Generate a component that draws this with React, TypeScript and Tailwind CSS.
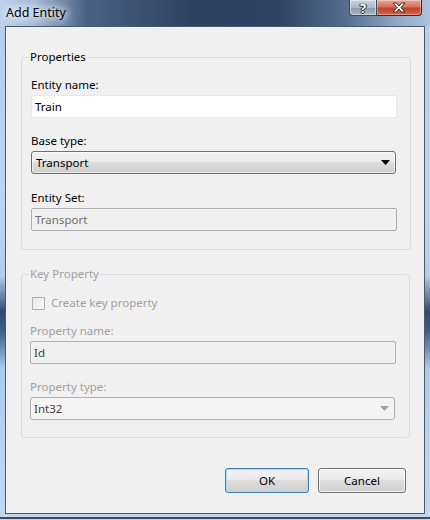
import React from "react";

const font = { fontFamily: '"Segoe UI", "Noto Sans", "Open Sans", sans-serif' };

function Label({ children, disabled }: { children: React.ReactNode; disabled?: boolean }) {
  return (
    <div className={`text-[11.5px] leading-[15px] ${disabled ? "text-[#a0a0a0]" : "text-black"}`}>{children}</div>
  );
}

function Arrow({ color }: { color: string }) {
  return (
    <svg width="9" height="5" viewBox="0 0 9 5">
      <path d="M0 0 H9 L4.5 5 Z" fill={color} />
    </svg>
  );
}

export default function App() {
  return (
    <div
      style={font}
      className="w-[430px] h-[520px] flex flex-col overflow-hidden bg-[linear-gradient(180deg,#b5cde9_0%,#bcd4ef_40%,#b3cdea_53%,#2f4a6c_60%,#40618a_64%,#aecbec_71%,#c2d8f1_100%)]"
    >
      {/* title bar */}
      <div className="h-[26px] flex items-start justify-between bg-[linear-gradient(90deg,#bcd2ea_0%,#a4bbd6_8%,#4a6384_20%,#2c425f_45%,#2e4462_65%,#536c8c_80%,#8fa6c1_92%,#aec3dc_100%)]">
        <div className="pl-[6px] pt-[5px] text-[12.5px] leading-[15px] text-black [text-shadow:0_0_6px_#ffffff,0_0_10px_#ffffff,0_0_14px_#ffffff]">
          Add Entity
        </div>
        <div className="flex mr-[8px]">
          <div className="w-[28px] h-[16px] border border-[#3a4658] border-t-0 rounded-bl-[4px] bg-[linear-gradient(180deg,#c9d3df_0%,#aab8c9_50%,#8b9cb2_55%,#a9b8ca_100%)] shadow-[inset_0_0_0_1px_rgba(255,255,255,0.45)] flex items-center justify-center">
            <span className="text-white font-bold text-[13px] leading-[14px] [text-shadow:0_0_1px_#222,0_0_1px_#222,1px_0_0_#333,-1px_0_0_#333,0_1px_0_#333]">?</span>
          </div>
          <div className="w-[45px] h-[16px] border border-[#3a2b2b] border-t-0 border-l-0 rounded-br-[4px] bg-[linear-gradient(180deg,#e8a99a_0%,#d1705d_45%,#c2412a_55%,#d6654a_100%)] shadow-[inset_0_0_0_1px_rgba(255,255,255,0.35)] flex items-center justify-center">
            <svg width="14" height="11" viewBox="0 0 14 11">
              <path
                d="M1 1 H4.5 L7 4 L9.5 1 H13 L9 5.5 L13 10 H9.5 L7 7 L4.5 10 H1 L5 5.5 Z"
                fill="#ffffff"
                stroke="#3d2a2a"
                strokeWidth="1"
                strokeLinejoin="round"
              />
            </svg>
          </div>
        </div>
      </div>

      {/* client area */}
      <div className="mx-[5px] h-[488px] border border-[#475a72] bg-[#f0f0f0] flex flex-col pl-[15px] pr-[13px] pt-[22px]">
        {/* Properties group */}
        <fieldset className="border border-[#d5dfe5] rounded-[3px] pl-[9px] pr-[13px] pt-[12px] pb-[17px] h-[201px]">
          <legend className="ml-[-2px] px-[1px] text-[11.5px] leading-[16px] text-black">Properties</legend>
          <Label>Entity name:</Label>
          <div className="mt-[3px] h-[23px] bg-white border border-[#e3e9ef] rounded-[2px] flex items-center pl-[3px] text-[11.5px] text-black">
            Train
          </div>
          <div className="mt-[15px]">
            <Label>Base type:</Label>
          </div>
          <div className="mt-[3px] mr-[1px] h-[23px] border border-[#707070] rounded-[3px] bg-[linear-gradient(180deg,#f2f2f2_0%,#ebebeb_45%,#dddddd_50%,#cfcfcf_100%)] shadow-[inset_0_0_0_1px_rgba(255,255,255,0.6)] flex items-center justify-between pl-[4px] pr-[5px] text-[11.5px] text-black">
            <span>Transport</span>
            <Arrow color="#000000" />
          </div>
          <div className="mt-[16px]">
            <Label>Entity Set:</Label>
          </div>
          <div className="mt-[3px] h-[23px] border border-[#adadad] rounded-[2px] bg-[#f0f0f0] flex items-center pl-[3px] text-[11.5px] text-[#6d6d6d]">
            Transport
          </div>
        </fieldset>

        {/* Key Property group */}
        <fieldset className="mt-[16px] mr-[1px] border border-[#d5dfe5] rounded-[3px] pl-[8px] pr-[13px] pt-[14px] h-[172px]">
          <legend className="ml-[-1px] px-[1px] text-[11.5px] leading-[16px] text-[#a0a0a0]">Key Property</legend>
          <div className="flex items-center ml-[2px] h-[14px]">
            <div className="w-[13px] h-[13px] border border-[#b1b1b1] bg-[linear-gradient(135deg,#e8e8e8,#f8f8f8)]" />
            <span className="ml-[6px] text-[11.5px] text-[#a0a0a0]">Create key property</span>
          </div>
          <div className="mt-[13px]">
            <Label disabled>Property name:</Label>
          </div>
          <div className="mt-[3px] h-[23px] border border-[#adb2b5] rounded-[2px] bg-[#f0f0f0] flex items-center pl-[3px] text-[11.5px] text-[#404040]">
            Id
          </div>
          <div className="mt-[15px]">
            <Label disabled>Property type:</Label>
          </div>
          <div className="mt-[3px] mr-[1px] h-[23px] border border-[#adb2b5] rounded-[3px] bg-[#f4f4f4] flex items-center justify-between pl-[3px] pr-[5px] text-[11.5px] text-[#404040]">
            <span>Int32</span>
            <Arrow color="#a0a0a0" />
          </div>
        </fieldset>

        {/* buttons */}
        <div className="mt-[30px] flex justify-end gap-[9px] pr-[5px]">
          <button className="w-[84px] h-[25px] border border-[#3c7fb1] rounded-[3px] bg-[linear-gradient(180deg,#f2f2f2_0%,#ebebeb_45%,#dddddd_50%,#cfcfcf_100%)] shadow-[inset_0_0_0_1px_#a6dcf7] text-[11.5px] text-black">
            OK
          </button>
          <button className="w-[88px] h-[25px] border border-[#707070] rounded-[3px] bg-[linear-gradient(180deg,#f2f2f2_0%,#ebebeb_45%,#dddddd_50%,#cfcfcf_100%)] shadow-[inset_0_0_0_1px_rgba(255,255,255,0.7)] text-[11.5px] text-black">
            Cancel
          </button>
        </div>
      </div>
      <div className="h-[6px] mt-[-1px] mx-0 border-b-[2px] border-[#3b4d63]" />
    </div>
  );
}
